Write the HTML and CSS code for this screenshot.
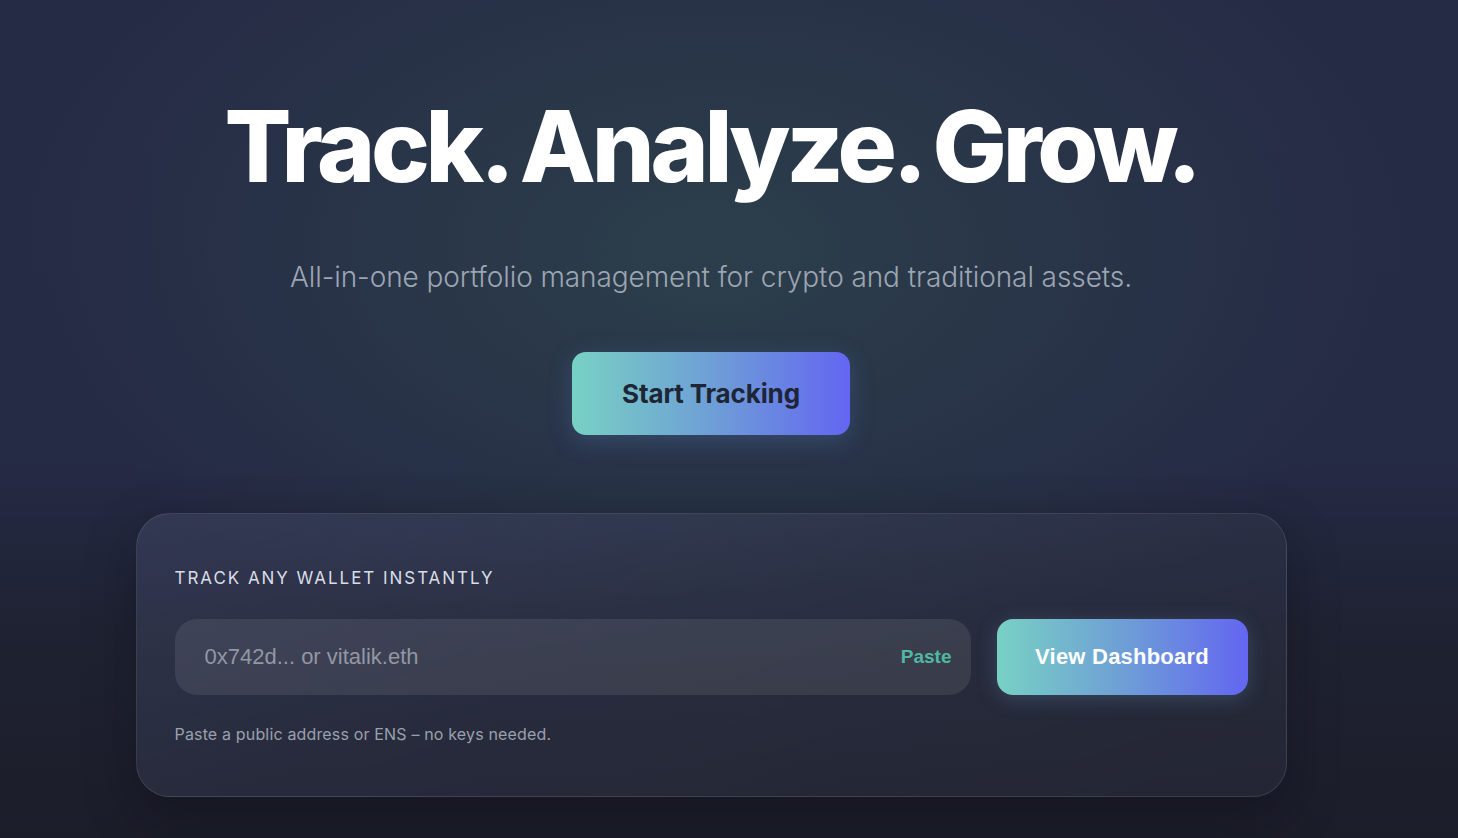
FILE: index.html
```html
<!DOCTYPE html>
<html lang="en">
<head>
<meta charset="utf-8">
<title>Track. Analyze. Grow.</title>
<link rel="stylesheet" href="styles.css">
</head>
<body>
<main class="hero">
  <h1 class="hero-title">Track. Analyze. Grow.</h1>
  <p class="hero-sub">All-in-one portfolio management for crypto and traditional assets.</p>
  <button class="btn-start" type="button">Start Tracking</button>
  <section class="wallet-card">
    <div class="wallet-label">TRACK ANY WALLET INSTANTLY</div>
    <div class="wallet-row">
      <div class="wallet-input">
        <input type="text" placeholder="0x742d... or vitalik.eth">
        <button class="paste-btn" type="button">Paste</button>
      </div>
      <button class="btn-dashboard" type="button">View Dashboard</button>
    </div>
    <p class="wallet-hint">Paste a public address or ENS – no keys needed.</p>
  </section>
</main>
</body>
</html>
```

FILE: styles.css
```css
* { box-sizing: border-box; }
html, body { height: 100%; }
body {
  margin: 0;
  font-family: "Inter", "Liberation Sans", sans-serif;
  color: #fff;
  background:
    radial-gradient(ellipse 700px 420px at 49% 30%, rgba(45, 66, 76, 0.85), rgba(45, 66, 76, 0) 100%),
    linear-gradient(180deg, #262b45 0%, #252a45 55%, #1f2232 75%, #1b1d29 100%);
  overflow: hidden;
}
.hero {
  display: flex;
  flex-direction: column;
  align-items: center;
  padding: 97px 36px 0 0;
}
.hero-title {
  margin: 0;
  font-size: 99px;
  line-height: 1;
  font-weight: 800;
  letter-spacing: -0.043em;
  word-spacing: -0.04em;
  color: #ffffff;
}
.hero-sub {
  margin: 64px 0 0;
  font-size: 28px;
  line-height: 34px;
  font-weight: 300;
  letter-spacing: -0.003em;
  color: #9ca5b2;
}
.btn-start {
  margin-top: 58px;
  width: 278px;
  height: 83px;
  border: none;
  border-radius: 14px;
  background: linear-gradient(90deg, #78d1c4 0%, #6e9fd6 50%, #6366f1 100%);
  color: #1e2635;
  font-family: "Inter", sans-serif;
  font-size: 26px;
  font-weight: 700;
  letter-spacing: -0.005em;
  box-shadow: 0 6px 24px rgba(99, 140, 220, 0.25);
}
.wallet-card {
  margin-top: 78px;
  width: 1151px;
  height: 284px;
  border-radius: 34px;
  border: 1px solid rgba(255, 255, 255, 0.1);
  background: linear-gradient(160deg, rgba(70, 78, 110, 0.45) 0%, rgba(60, 66, 90, 0.35) 45%, rgba(45, 48, 62, 0.45) 100%);
  box-shadow: 0 20px 50px rgba(10, 12, 20, 0.35);
  padding: 54px 38px 0 38px;
}
.wallet-label {
  font-size: 17px;
  line-height: 20px;
  letter-spacing: 0.115em;
  color: #d9dde7;
  font-weight: 400;
}
.wallet-row {
  display: flex;
  gap: 26px;
  margin-top: 31px;
}
.wallet-input {
  flex: 1;
  height: 76px;
  border-radius: 22px;
  background: rgba(255, 255, 255, 0.085);
  display: flex;
  align-items: center;
  padding: 0 19px 0 28px;
}
.wallet-input input {
  flex: 1;
  background: transparent;
  border: none;
  outline: none;
  font-family: "Liberation Sans", Arial, sans-serif;
  font-size: 22px;
  color: #e5e7eb;
}
.wallet-input input::placeholder { color: #9297a3; }
.paste-btn {
  background: none;
  border: none;
  padding: 0;
  font-family: "Liberation Sans", Arial, sans-serif;
  font-weight: 700;
  font-size: 19px;
  color: #4fb7a2;
}
.btn-dashboard {
  width: 251px;
  height: 76px;
  border: none;
  border-radius: 16px;
  background: linear-gradient(90deg, #78d1c4 0%, #6e9fd6 50%, #6366f1 100%);
  color: #ffffff;
  font-family: "Liberation Sans", Arial, sans-serif;
  font-weight: 700;
  font-size: 22px;
  letter-spacing: 0.01em;
  box-shadow: 0 4px 20px rgba(110, 160, 210, 0.25);
}
.wallet-hint {
  margin: 29px 0 0;
  font-size: 16px;
  line-height: 20px;
  color: #9aa0ad;
  letter-spacing: 0.01em;
}
```
